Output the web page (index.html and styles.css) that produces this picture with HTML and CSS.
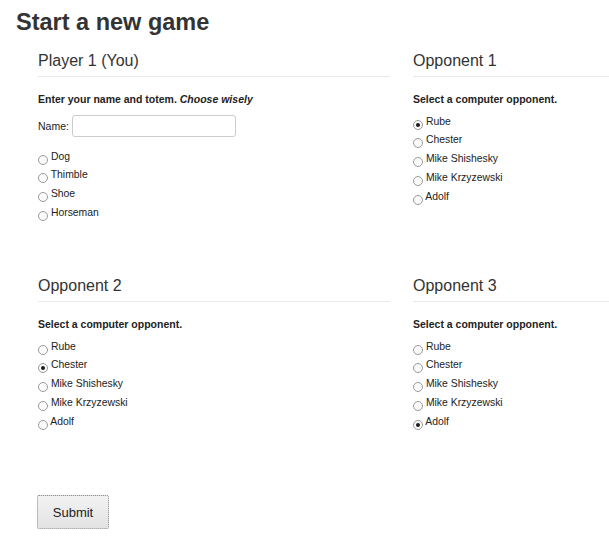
FILE: index.html
```html
<!DOCTYPE html>
<html lang="en">
<head>
  <meta charset="UTF-8" />
  <title>Start a new game</title>
  <link rel="stylesheet" href="styles.css">
</head>
<body>
  <h1 class="title">Start a new game</h1>

  <form class="new-game">
    <div class="game-grid">
      <section class="panel">
        <h2>Player 1 (You)</h2>
        <p class="hint">Enter your name and totem. <em>Choose wisely</em></p>
        <div class="name-row">
          <label for="playerName">Name:</label>
          <input type="text" id="playerName" class="name-input">
        </div>
        <ul class="choices choices-totem">
          <li><label><input type="radio" name="totem"> Dog</label></li>
          <li><label><input type="radio" name="totem"> Thimble</label></li>
          <li><label><input type="radio" name="totem"> Shoe</label></li>
          <li><label><input type="radio" name="totem"> Horseman</label></li>
        </ul>
      </section>

      <section class="panel">
        <h2>Opponent 1</h2>
        <p class="hint">Select a computer opponent.</p>
        <ul class="choices">
          <li><label><input type="radio" name="opp1" checked> Rube</label></li>
          <li><label><input type="radio" name="opp1"> Chester</label></li>
          <li><label><input type="radio" name="opp1"> Mike Shishesky</label></li>
          <li><label><input type="radio" name="opp1"> Mike Krzyzewski</label></li>
          <li><label><input type="radio" name="opp1"> Adolf</label></li>
        </ul>
      </section>

      <section class="panel">
        <h2>Opponent 2</h2>
        <p class="hint">Select a computer opponent.</p>
        <ul class="choices">
          <li><label><input type="radio" name="opp2"> Rube</label></li>
          <li><label><input type="radio" name="opp2" checked> Chester</label></li>
          <li><label><input type="radio" name="opp2"> Mike Shishesky</label></li>
          <li><label><input type="radio" name="opp2"> Mike Krzyzewski</label></li>
          <li><label><input type="radio" name="opp2"> Adolf</label></li>
        </ul>
      </section>

      <section class="panel">
        <h2>Opponent 3</h2>
        <p class="hint">Select a computer opponent.</p>
        <ul class="choices">
          <li><label><input type="radio" name="opp3"> Rube</label></li>
          <li><label><input type="radio" name="opp3"> Chester</label></li>
          <li><label><input type="radio" name="opp3"> Mike Shishesky</label></li>
          <li><label><input type="radio" name="opp3"> Mike Krzyzewski</label></li>
          <li><label><input type="radio" name="opp3" checked> Adolf</label></li>
        </ul>
      </section>
    </div>

    <button type="submit" class="submit-btn">Submit</button>
  </form>
</body>
</html>
```

FILE: styles.css
```css
* {
  margin: 0;
  padding: 0;
  box-sizing: border-box;
  font-family: 'Liberation Sans', Arial, sans-serif;
}

body {
  background: #ffffff;
  color: #333;
}

.title {
  font-size: 23.5px;
  line-height: 28px;
  font-weight: bold;
  color: #333;
  padding: 8px 0 0 16px;
}

.new-game {
  padding: 15px 0 0 38px;
}

.game-grid {
  display: grid;
  grid-template-columns: 352px 196px;
  grid-template-rows: 225px 219px;
  column-gap: 23px;
}

.panel h2 {
  font-size: 16px;
  font-weight: normal;
  line-height: 20px;
  color: #333;
  padding-bottom: 5px;
  border-bottom: 1px solid #e8e8e8;
}

.hint {
  margin-top: 15px;
  font-size: 10.5px;
  line-height: 14px;
  font-weight: bold;
  color: #222;
}

.hint em {
  font-style: italic;
}

.name-row {
  display: flex;
  align-items: center;
  gap: 3px;
  margin-top: 9px;
  font-size: 10.5px;
  color: #222;
}

.name-input {
  width: 164px;
  height: 22px;
  border: 1px solid #ccc;
  border-radius: 3px;
  padding: 2px 6px;
  font-size: 12px;
}

.choices {
  list-style: none;
  margin-top: 6.5px;
}

.choices-totem {
  margin-top: 10.5px;
}

.choices li {
  height: 18.75px;
  line-height: 18.75px;
  font-size: 10.4px;
  color: #222;
}

.choices input[type="radio"] {
  appearance: none;
  -webkit-appearance: none;
  display: inline-block;
  width: 10px;
  height: 10px;
  border: 1px solid #9a9a9a;
  border-radius: 50%;
  background: #fbfbfb;
  vertical-align: -5px;
  position: relative;
}

.choices input[type="radio"]:checked::after {
  content: "";
  position: absolute;
  left: 2px;
  top: 2px;
  width: 4px;
  height: 4px;
  border-radius: 50%;
  background: #1a1a1a;
}

.submit-btn {
  width: 72px;
  height: 34px;
  font-size: 13px;
  color: #222;
  background: linear-gradient(#f2f2f2, #e3e3e3);
  border: 1px dotted #8a8a8a;
  border-radius: 2px;
  margin-left: -1px;
}
```
